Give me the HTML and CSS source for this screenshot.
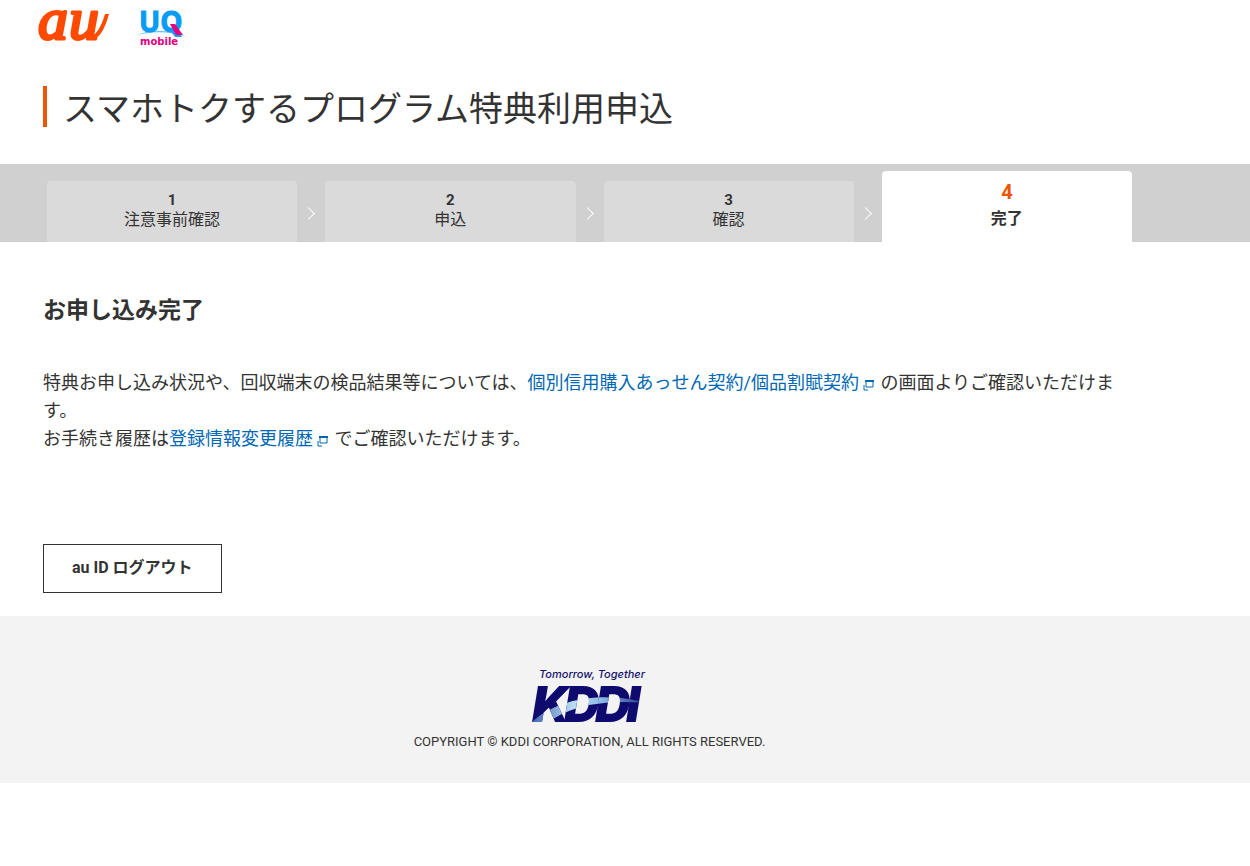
FILE: index.html
```html
<!DOCTYPE html>
<html lang="ja">
<head>
  <meta charset="UTF-8" />
  <meta name="viewport" content="width=device-width, initial-scale=1" />
  <title>スマホトクするプログラム特典利用申込</title>
  <link rel="stylesheet" href="styles.css">
</head>
<body>
  <header class="header">
    <svg class="logo-au" viewBox="0 0 74 36" role="img" aria-label="au">
      <text x="2 33" y="31">au</text>
      <path d="M54 32Q66 32 73 6L69 6Q63 26 55 28Z" />
    </svg>
    <svg class="logo-uq" viewBox="0 0 54 40" role="img" aria-label="UQ mobile">
      <path class="uq-arc" d="M0 28Q26 17 53 29Q26 20 0 28Z" />
      <text class="uq-name" x="5" y="24">UQ</text>
      <path class="uq-tail" d="M36 16L41 16L49 27L42 27Z" />
      <text class="uq-sub" x="6" y="37">mobile</text>
    </svg>
  </header>

  <main>
    <h1 class="title">スマホトクするプログラム特典利用申込</h1>

    <div class="steps">
      <ol class="steps-list">
        <li class="step"><span class="step-num">1</span>注意事前確認</li>
        <li class="step"><span class="step-num">2</span>申込</li>
        <li class="step"><span class="step-num">3</span>確認</li>
        <li class="step current" aria-current="step"><span class="step-num">4</span>完了</li>
      </ol>
    </div>

    <section class="content">
      <h2>お申し込み完了</h2>
      <p>
        特典お申し込み状況や、回収端末の検品結果等については、<a href="#">個別信用購入あっせん契約/個品割賦契約<svg class="blank" viewBox="0 0 12 12" aria-hidden="true"><path d="M4 2V8H11V2M2 6V11H6" /><path class="blank-bar" d="M3 2H12" /></svg></a>
        の画面よりご確認いただけます。<br>
        お手続き履歴は<a href="#">登録情報変更履歴<svg class="blank" viewBox="0 0 12 12" aria-hidden="true"><path d="M4 2V8H11V2M2 6V11H6" /><path class="blank-bar" d="M3 2H12" /></svg></a>
        でご確認いただけます。
      </p>
      <button type="button" class="logout">au ID ログアウト</button>
    </section>
  </main>

  <footer class="footer">
    <svg class="logo-kddi" viewBox="0 0 116 56" role="img" aria-label="Tomorrow, Together KDDI">
      <defs>
        <linearGradient id="glow" x1="0" y1="0" x2="1" y2="0">
          <stop offset="0" stop-color="#3f66b0" />
          <stop offset="0.35" stop-color="#b9dcf2" />
          <stop offset="0.6" stop-color="#8dbbe4" />
          <stop offset="1" stop-color="#1a2a86" />
        </linearGradient>
        <clipPath id="letters">
          <text class="kddi-name" x="0 32 63 94" y="54">KDDI</text>
        </clipPath>
      </defs>
      <text class="kddi-tag" x="7" y="10">Tomorrow, Together</text>
      <text class="kddi-name" x="0 32 63 94" y="54">KDDI</text>
      <path clip-path="url(#letters)" fill="url(#glow)" d="M0 54C24 32 66 22 116 35C70 31 36 38 14 56Z" />
    </svg>
    <small>COPYRIGHT © KDDI CORPORATION, ALL RIGHTS RESERVED.</small>
  </footer>
</body>
</html>
```

FILE: styles.css
```css
body {
  margin: 0;
  background: #fff;
  color: #333;
  font-family: Roboto, "Noto Sans CJK JP", sans-serif;
  font-size: 18px;
  line-height: 28px;
}

svg {
  overflow: visible;
}

/* header */
.header {
  display: flex;
  align-items: flex-start;
  gap: 24px;
  padding: 8px 36px 0;
}

.logo-au {
  width: 74px;
  height: 36px;
}

.logo-au text {
  fill: #ff4a00;
  stroke: #ff4a00;
  stroke-width: 3;
  stroke-linejoin: round;
  font: italic 60px "Liberation Serif", serif;
}

.logo-au path {
  fill: #ff4a00;
}

.logo-uq {
  width: 54px;
  height: 40px;
}

.uq-name {
  fill: #0a9bf5;
  stroke: #0a9bf5;
  stroke-width: 1;
  font: bold 28px "Open Sans", sans-serif;
}

.uq-arc {
  fill: #6cc6f5;
}

.uq-tail {
  fill: #e5007f;
}

.uq-sub {
  fill: #e5007f;
  font: bold 10px "DejaVu Sans", sans-serif;
}

.title {
  margin: 38px 43px 37px;
  padding: 5px 0 0 16px;
  border-left: 4px solid #eb5505;
  font-size: 34px;
  font-weight: 400;
  line-height: 36px;
}

/* steps */
.steps {
  padding: 7px 118px 0 47px;
  background: #d0d0d0;
}

.steps-list {
  display: grid;
  grid-template-columns: repeat(4, 1fr);
  align-items: end;
  gap: 28px;
  margin: 0;
  padding: 0;
  list-style: none;
}

.step {
  position: relative;
  box-sizing: border-box;
  height: 61px;
  padding-top: 9px;
  border-radius: 4px 4px 0 0;
  background: #dadada;
  font-size: 16px;
  line-height: 20px;
  text-align: center;
}

.step-num {
  display: block;
  font-size: 15px;
  font-weight: 700;
}

.step:not(:last-child)::after {
  content: "";
  position: absolute;
  top: 28px;
  right: -16px;
  width: 8px;
  height: 8px;
  border-top: 1px solid #fff;
  border-right: 1px solid #fff;
  transform: rotate(45deg);
}

.current {
  height: 71px;
  padding-top: 11px;
  background: #fff;
  font-weight: 700;
}

.current .step-num {
  margin-bottom: 7px;
  color: #eb5505;
  font-size: 20px;
}

/* content */
.content {
  padding: 52px 114px 23px 43px;
}

.content h2 {
  margin: 0 0 41px;
  font-size: 23px;
  line-height: 34px;
}

.content p {
  margin: 0 0 91px;
}

.content a {
  color: #0068b3;
  text-decoration: none;
}

.blank {
  width: 12px;
  height: 12px;
  margin: 0 2px 0 3px;
  vertical-align: -2px;
}

.blank path {
  fill: none;
  stroke: #0068b3;
  stroke-width: 1;
}

.blank .blank-bar {
  stroke-width: 2;
}

.logout {
  display: block;
  padding: 11px 28px 13px;
  border: 1px solid #333;
  background: #fff;
  color: #333;
  font-family: inherit;
  font-size: 16px;
  font-weight: 700;
  line-height: 23px;
  cursor: pointer;
}

/* footer */
.footer {
  display: flex;
  flex-direction: column;
  align-items: center;
  gap: 8px;
  padding: 52px 71px 31px 0;
  background: #f3f3f3;
}

.logo-kddi {
  width: 116px;
  height: 56px;
}

.kddi-tag {
  fill: #14106b;
  font: italic 500 11px Inter, sans-serif;
}

.kddi-name {
  fill: #0e0a6e;
  font: italic 900 49px Inter, sans-serif;
}

.footer small {
  font-size: 13px;
  line-height: 20px;
}
```
